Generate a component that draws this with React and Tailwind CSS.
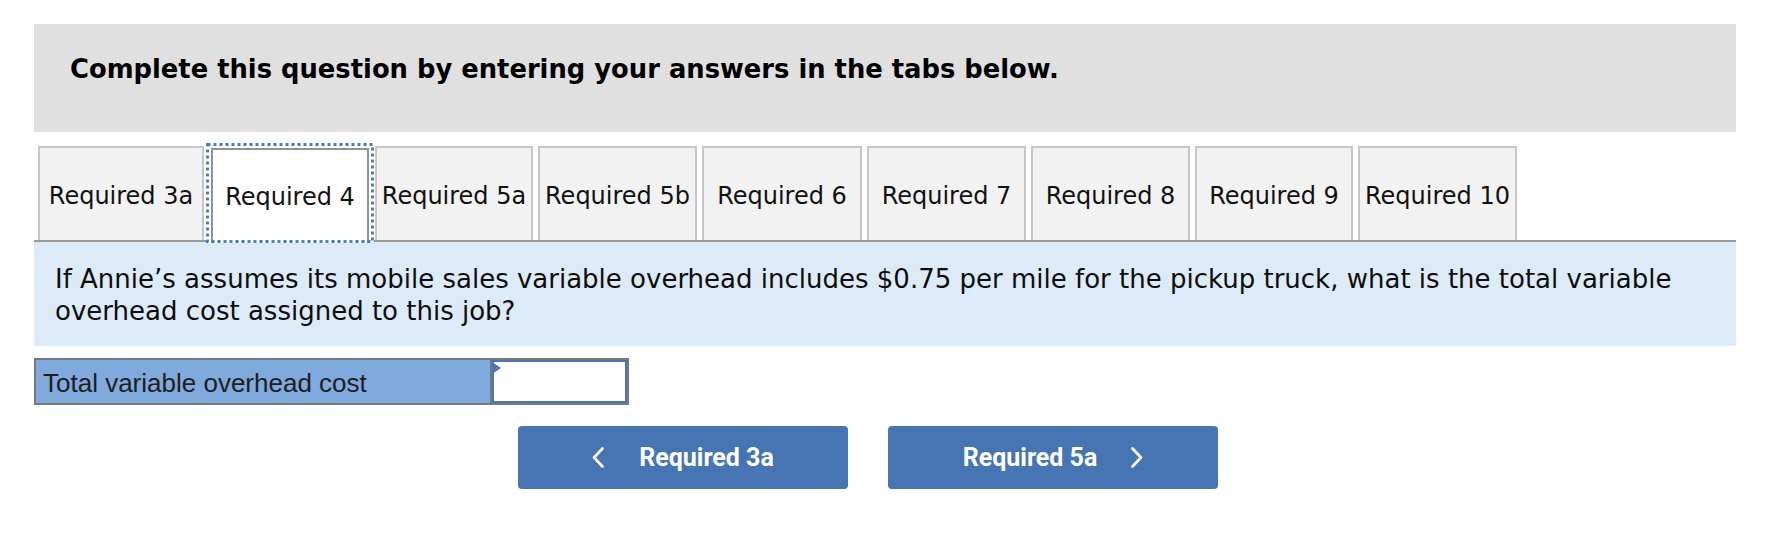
import React from "react";

const tabs = [
  { label: "Required 3a", cls: "w-[166px] ml-[4px]" },
  { label: "Required 4", active: true },
  { label: "Required 5a", cls: "w-[158px] ml-[1px]" },
  { label: "Required 5b", cls: "w-[159px] ml-[5px]" },
  { label: "Required 6", cls: "w-[160px] ml-[5px]" },
  { label: "Required 7", cls: "w-[159px] ml-[5px]" },
  { label: "Required 8", cls: "w-[159px] ml-[5px]" },
  { label: "Required 9", cls: "w-[158px] ml-[5px]" },
  { label: "Required 10", cls: "w-[159px] ml-[5px]" },
];

function ChevLeft() {
  return (
    <svg width="12" height="21" viewBox="0 0 12 21" fill="none">
      <polyline points="10.5,1.5 2,10.5 10.5,19.5" stroke="#ffffff" strokeWidth="2.6" strokeLinecap="round" strokeLinejoin="round" />
    </svg>
  );
}

function ChevRight() {
  return (
    <svg width="12" height="21" viewBox="0 0 12 21" fill="none">
      <polyline points="1.5,1.5 10,10.5 1.5,19.5" stroke="#ffffff" strokeWidth="2.6" strokeLinecap="round" strokeLinejoin="round" />
    </svg>
  );
}

export default function App() {
  return (
    <div className="w-[1774px] h-[542px] bg-white overflow-hidden pt-[24px] pl-[34px]">
      <div className="w-[1702px]">
        <div className="h-[108px] bg-[#e0e0e0] pt-[29px] pl-[36px]">
          <div className="font-['DejaVu_Sans',sans-serif] font-bold text-[25.8px] leading-[32px] text-black">
            Complete this question by entering your answers in the tabs below.
          </div>
        </div>

        <div className="mt-[11px] h-[99px] flex items-end border-b-2 border-[#999999] font-['DejaVu_Sans',sans-serif] text-[24px] text-[#111111]">
          {tabs.map((t) =>
            t.active ? (
              <div
                key={t.label}
                className="relative z-10 ml-[2px] w-[168px] h-[100px] mb-[-3px] p-[5px] pb-0 bg-white"
              >
                <div className="h-full border-2 border-b-0 border-[#919191] bg-white flex items-center justify-center">
                  {t.label}
                </div>
                <svg className="absolute left-0 top-0" width="168" height="100" viewBox="0 0 168 100" fill="none">
                  <rect x="1.5" y="1.5" width="165" height="97" stroke="#4b7bbf" strokeWidth="3" strokeDasharray="3 3" />
                </svg>
              </div>
            ) : (
              <div
                key={t.label}
                className={`${t.cls} h-[94px] border-2 border-b-0 border-[#c6c6c6] bg-[#f2f2f2] flex items-center justify-center whitespace-nowrap pt-[3px]`}
              >
                {t.label}
              </div>
            )
          )}
        </div>

        <div className="h-[104px] bg-[#ddebf8] pt-[21px] pl-[21px] pr-[21px] font-['DejaVu_Sans',sans-serif] text-[26px] leading-[32px] text-[#0d0d0d]">
          If Annie’s assumes its mobile sales variable overhead includes $0.75 per mile for the pickup truck, what is the total variable overhead cost assigned to this job?
        </div>

        <div className="mt-[12px] h-[47px] w-[595px] flex border-2 border-[#787878]">
          <div className="w-[454px] h-full bg-[#80a9de] flex items-center pl-[7px] pt-[3px] font-['Liberation_Sans',Arial,sans-serif] text-[26px] text-[#1e1e1e]">
            Total variable overhead cost
          </div>
          <div className="relative flex-1 h-full border-l-2 border-[#787878]">
            <div className="h-full border-2 border-[#4a77b3] bg-white"></div>
            <div className="absolute left-0 top-[2px] w-0 h-0 border-l-[9px] border-l-[#4a77b3] border-y-[6px] border-y-transparent"></div>
          </div>
        </div>

        <div className="mt-[21px] ml-[484px] flex gap-[40px] font-['Roboto',sans-serif] font-bold text-[25px] text-white">
          <div className="w-[330px] h-[63px] rounded-[4px] bg-[#4775b3] flex items-center justify-center">
            <ChevLeft />
            <span className="ml-[35px]">Required 3a</span>
          </div>
          <div className="w-[330px] h-[63px] rounded-[4px] bg-[#4775b3] flex items-center justify-center">
            <span className="mr-[34px]">Required 5a</span>
            <ChevRight />
          </div>
        </div>
      </div>
    </div>
  );
}
